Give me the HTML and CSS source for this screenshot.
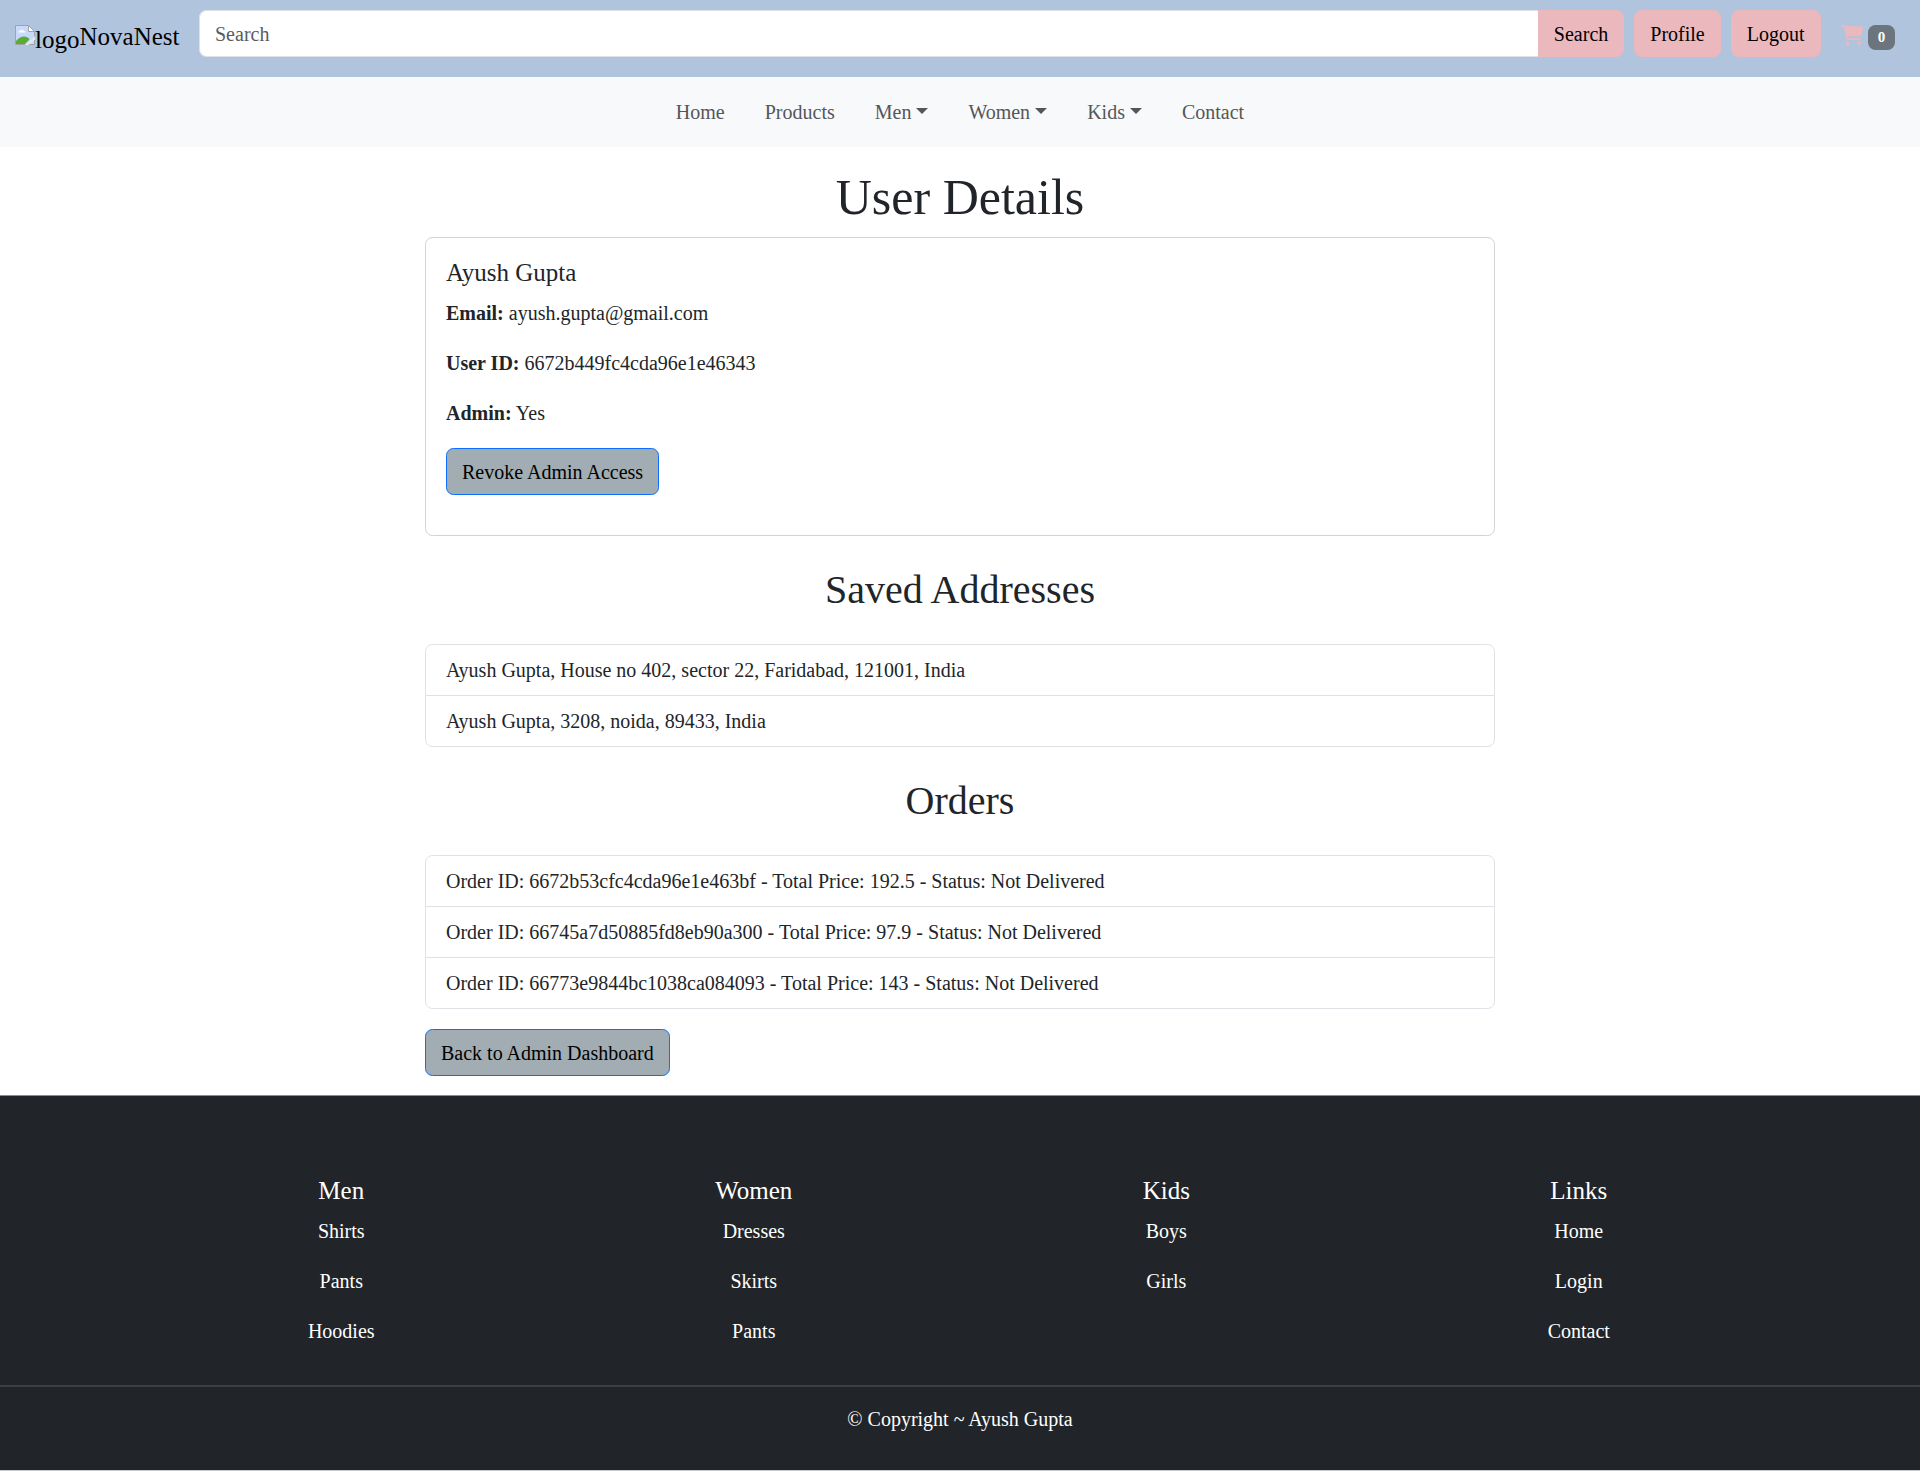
FILE: index.html
```html
<!DOCTYPE html>
<html lang="en">
<head>
<meta charset="utf-8">
<title>NovaNest - User Details</title>
<link rel="stylesheet" href="styles.css">
</head>
<body>
<header class="topbar">
  <a class="brand">
    <svg class="brand-image" viewBox="0 0 20 20" aria-hidden="true">
      <path d="M.5.5h13l6 6v13H.5z" fill="#c7dafc"/>
      <path d="M3.500 7.500c0-1.200.9-1.800 1.800-1.700C5.800 4.400 8.200 4.400 8.700 6c1-.1 1.500.6 1.500 1.500z" fill="#fff"/>
      <path d="M1 19v-3c2.500-3 5-4.500 8-4.500 2.500 0 4.500 1.300 5.500 3L10 19z" fill="#5aac35"/>
      <path d="M10 20 20 11.500v3L14 20z" fill="#dfe8f6"/>
      <path d="M10 19.500H.5V.5h13l6 6v5M19.500 15v4.500H14" fill="none" stroke="#a3a3a3"/>
      <path d="M13.500.5v6h6z" fill="#fff" stroke="#a3a3a3"/>
    </svg><span class="brand-alt">logo</span><span>NovaNest</span>
  </a>
  <form class="search">
    <input class="search-input" type="text" placeholder="Search">
    <button class="btn btn-pink search-btn" type="button">Search</button>
  </form>
  <a class="btn btn-pink">Profile</a>
  <a class="btn btn-pink">Logout</a>
  <a class="cart">
    <svg class="cart-icon" viewBox="0 0 576 512" aria-hidden="true"><path fill="currentColor" d="M0 24C0 10.700 10.700 0 24 0H69.500c22 0 41.500 12.800 50.600 32h411c26.300 0 45.500 25 38.600 50.400l-41 152.300c-8.500 31.400-37 53.300-69.500 53.300H170.700l5.400 28.500c2.200 11.300 12.100 19.500 23.600 19.500H488c13.300 0 24 10.700 24 24s-10.700 24-24 24H199.700c-34.600 0-64.300-24.600-70.700-58.500L77.400 54.500c-.7-3.800-4-6.500-7.900-6.500H24C10.700 48 0 37.300 0 24zM128 464a48 48 0 1 1 96 0 48 48 0 1 1-96 0zm336-48a48 48 0 1 1 0 96 48 48 0 1 1 0-96z"/></svg>
    <span class="badge">0</span>
  </a>
</header>

<nav class="menu">
  <a class="menu-link">Home</a>
  <a class="menu-link">Products</a>
  <a class="menu-link dropdown">Men</a>
  <a class="menu-link dropdown">Women</a>
  <a class="menu-link dropdown">Kids</a>
  <a class="menu-link">Contact</a>
</nav>

<main class="content">
  <h1 class="page-title">User Details</h1>
  <section class="card">
    <h5 class="card-title">Ayush Gupta</h5>
    <p class="card-text"><strong>Email:</strong> ayush.gupta@gmail.com</p>
    <p class="card-text"><strong>User ID:</strong> 6672b449fc4cda96e1e46343</p>
    <p class="card-text"><strong>Admin:</strong> Yes</p>
    <button class="btn btn-grey" type="button">Revoke Admin Access</button>
  </section>

  <h2 class="section-title">Saved Addresses</h2>
  <ul class="list">
    <li class="list-item">Ayush Gupta, House no 402, sector 22, Faridabad, 121001, India</li>
    <li class="list-item">Ayush Gupta, 3208, noida, 89433, India</li>
  </ul>

  <h2 class="section-title">Orders</h2>
  <ul class="list">
    <li class="list-item">Order ID: 6672b53cfc4cda96e1e463bf - Total Price: 192.5 - Status: Not Delivered</li>
    <li class="list-item">Order ID: 66745a7d50885fd8eb90a300 - Total Price: 97.9 - Status: Not Delivered</li>
    <li class="list-item">Order ID: 66773e9844bc1038ca084093 - Total Price: 143 - Status: Not Delivered</li>
  </ul>
  <a class="btn btn-grey back">Back to Admin Dashboard</a>
</main>

<footer class="footer">
  <div class="footer-cols">
    <div class="footer-col"><h5 class="footer-title">Men</h5><a class="footer-link">Shirts</a><a class="footer-link">Pants</a><a class="footer-link">Hoodies</a></div>
    <div class="footer-col"><h5 class="footer-title">Women</h5><a class="footer-link">Dresses</a><a class="footer-link">Skirts</a><a class="footer-link">Pants</a></div>
    <div class="footer-col"><h5 class="footer-title">Kids</h5><a class="footer-link">Boys</a><a class="footer-link">Girls</a></div>
    <div class="footer-col"><h5 class="footer-title">Links</h5><a class="footer-link">Home</a><a class="footer-link">Login</a><a class="footer-link">Contact</a></div>
  </div>
  <p class="copyright">© Copyright ~ Ayush Gupta</p>
</footer>
</body>
</html>
```
FILE: styles.css
```css
* { box-sizing: border-box; }

body {
  margin: 0;
  background: #fff;
  color: #212529;
  font: 20px/30px "Liberation Serif", "Times New Roman", serif;
}

h1, h2, h5, p, ul { margin: 0; padding: 0; font-weight: 400; }

.topbar {
  display: flex;
  align-items: flex-start;
  height: 77px;
  padding: 10px 15px;
  background: #b0c4de;
}

.brand {
  display: flex;
  width: 184px;
  padding-top: 8px;
  color: #000;
  font-size: 25px;
  line-height: 38px;
}
.brand-image { width: 20px; height: 20px; margin-top: 7px; }
.brand-alt { width: 44.5px; padding-top: 3px; }

.search { display: flex; flex: 1; margin-right: 10px; }
.search-input {
  flex: 1;
  min-width: 0;
  height: 47px;
  padding: 2px 15px 0;
  border: 1px solid #dee2e6;
  border-right: 0;
  border-radius: 7.5px 0 0 7.5px;
  background: #fff;
  font: inherit;
}
.search-input::placeholder { color: #595c5f; opacity: 1; }

.btn {
  display: inline-block;
  height: 47px;
  padding: 8px 15px 7px;
  border: 1px solid transparent;
  border-radius: 7.5px;
  color: #000;
  font: inherit;
  white-space: nowrap;
}
.btn-pink { border-color: #eab8bd; background: #eab8bd; margin-right: 10px; }
.search-btn { margin-right: 0; border-radius: 0 7.5px 7.5px 0; }
.btn-grey { border-color: #0d6efd; background: #a1adb2; }

.cart { display: flex; align-items: flex-start; gap: 5px; padding: 15px 10px 0; color: #eab8bd; }
.cart-icon { width: 22.5px; height: 20px; }
.badge {
  width: 27px;
  height: 25px;
  border-radius: 7.5px;
  background: #6c757d;
  color: #fff;
  font-size: 15px;
  font-weight: 700;
  line-height: 25px;
  text-align: center;
}

.menu {
  display: flex;
  justify-content: center;
  gap: 20px;
  height: 70px;
  padding-top: 20px;
  background: #f8f9fb;
}
.menu-link { padding: 0 10px; color: #555658; }
.dropdown::after {
  content: "";
  display: inline-block;
  margin-left: 5px;
  vertical-align: 5px;
  border: 6px solid transparent;
  border-top-color: currentColor;
  border-bottom: 0;
}

.content { width: 1070px; margin: 0 auto; padding-top: 20px; }
.page-title { margin-bottom: 10px; font-size: 50px; line-height: 60px; text-align: center; }
.card {
  height: 299px;
  padding: 20px;
  border: 1px solid #d3d3d4;
  border-radius: 7.5px;
}
.card-title { margin-bottom: 10px; font-size: 25px; line-height: 30px; }
.card-text { margin-bottom: 20px; }
.section-title { margin: 30px 0; font-size: 40px; line-height: 48px; text-align: center; }
.list { border: 1px solid #dee2e6; border-radius: 7.5px; list-style: none; }
.list-item { padding: 10px 20px; }
.list-item + .list-item { border-top: 1px solid #dee2e6; }
.back { display: block; width: fit-content; margin: 20px 0 19px; }

.footer {
  height: 376px;
  padding-top: 80px;
  border-top: 1px solid #8a8c8f;
  border-bottom: 1px solid #c8c9ca;
  background: #212529;
  color: #fff;
  text-align: center;
}
.footer-cols { display: grid; grid-template-columns: repeat(4, 1fr); width: 1650px; height: 209px; margin: 0 auto; }
.footer-title { margin-bottom: 10px; font-size: 25px; line-height: 30px; }
.footer-link { display: block; margin-bottom: 20px; }
.copyright { padding-top: 17px; border-top: 2px solid #3c4044; }
```
